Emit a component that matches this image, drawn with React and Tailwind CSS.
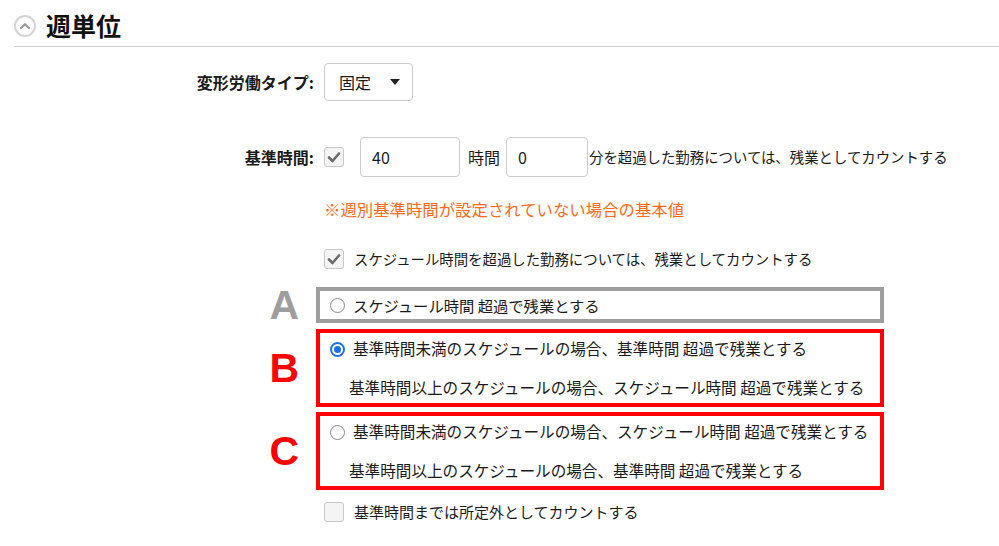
const Check = ({ checked }) => (
  <span className="inline-flex items-center justify-center w-[20px] h-[20px] shrink-0 rounded-[3px] border border-[#c8c8c8] bg-[#f4f4f4]">
    {checked && (
      <svg width="14" height="12" viewBox="0 0 14 12">
        <path d="M2 6.5 L5.5 10 L12 2.5" fill="none" stroke="#6b6b6b" strokeWidth="2.6" strokeLinecap="round" strokeLinejoin="round" />
      </svg>
    )}
  </span>
);

const Radio = ({ checked }) =>
  checked ? (
    <span className="inline-flex items-center justify-center w-[15px] h-[15px] shrink-0 rounded-full border-[2px] border-[#1a73e8] bg-white">
      <span className="w-[7px] h-[7px] rounded-full bg-[#1a73e8]" />
    </span>
  ) : (
    <span className="inline-block w-[15px] h-[15px] shrink-0 rounded-full border border-[#8a8a8a] bg-white" />
  );

const Label = ({ children }) => (
  <div className="w-[316px] shrink-0 text-right pr-[2px] font-bold text-[16px] text-[#1a1a1a]">{children}</div>
);

const Letter = ({ children, color }) => (
  <div className="w-[316px] shrink-0 flex items-center justify-end pr-[17px]">
    <span
      className={`text-[41px] font-bold leading-[28px] ${color}`}
      style={{ fontFamily: '"Liberation Sans", Arial, sans-serif' }}
    >
      {children}
    </span>
  </div>
);

const OptionBox = ({ border, lines, checked }) => (
  <div className={`w-[568px] border-[4px] ${border} pl-[10px] ${lines.length > 1 ? 'pt-[6px] pb-[5px] flex flex-col gap-[19px]' : ''}`}>
    {lines.map((line, i) => (
      <div key={i} className={`flex items-center gap-[8px] ${lines.length > 1 ? 'h-[20px] text-[15.6px]' : 'h-[28px] text-[15.3px]'}`}>
        {i === 0 ? <Radio checked={checked} /> : <span className="w-[11px]" />}
        <span>{line}</span>
      </div>
    ))}
  </div>
);

export default function App() {
  return (
    <div
      className="w-[999px] h-[546px] bg-white overflow-hidden text-[15px] text-[#1a1a1a]"
      style={{ fontFamily: '"Noto Sans CJK JP", "Noto Sans", sans-serif' }}
    >
      <div className="ml-[14px] h-[47px] border-b border-[#cfcfcf] flex items-center gap-[10px] pt-[5px]">
        <span className="w-[22px] h-[22px] rounded-full border-[2px] border-[#d4d4d4] flex items-center justify-center">
          <svg width="12" height="8" viewBox="0 0 12 8">
            <path d="M2 6 L6 2.2 L10 6" fill="none" stroke="#9a9a9a" strokeWidth="2.2" strokeLinecap="round" strokeLinejoin="round" />
          </svg>
        </span>
        <span className="text-[25px] font-bold text-[#111]">週単位</span>
      </div>

      <div className="flex items-center mt-[16px] h-[38px]">
        <Label>変形労働タイプ:</Label>
        <div className="ml-[8px] w-[89px] h-[38px] border border-[#cccccc] rounded-[4px] flex items-center justify-between pl-[14px] pr-[12px] text-[16px]">
          <span>固定</span>
          <svg width="10" height="6" viewBox="0 0 10 6">
            <path d="M0 0 L10 0 L5 6 Z" fill="#222" />
          </svg>
        </div>
      </div>

      <div className="flex items-center mt-[36px] h-[40px]">
        <Label>基準時間:</Label>
        <div className="ml-[8px] flex items-center">
          <Check checked />
          <div className="ml-[16px] w-[100px] h-[40px] border border-[#cccccc] rounded-[4px] flex items-center pl-[11px] text-[16px]">40</div>
          <span className="ml-[8px] text-[16px]">時間</span>
          <div className="ml-[6px] w-[82px] h-[40px] border border-[#cccccc] rounded-[4px] flex items-center pl-[11px] text-[16px]">0</div>
          <span className="ml-[1px] text-[14.4px]">分を超過した勤務については、残業としてカウントする</span>
        </div>
      </div>

      <div className="flex items-center mt-[22px] h-[20px]">
        <div className="w-[324px] shrink-0" />
        <span className="text-[16.4px] text-[#ff6a1a]">※週別基準時間が設定されていない場合の基本値</span>
      </div>

      <div className="flex items-center mt-[29px] h-[22px]">
        <div className="w-[324px] shrink-0" />
        <Check checked />
        <span className="ml-[10px] text-[14.4px]">スケジュール時間を超過した勤務については、残業としてカウントする</span>
      </div>

      <div className="flex items-stretch mt-[17px]">
        <Letter color="text-[#9e9e9e]">A</Letter>
        <OptionBox border="border-[#9e9e9e]" lines={['スケジュール時間 超過で残業とする']} />
      </div>

      <div className="flex items-stretch mt-[6px]">
        <Letter color="text-[#ff0000]">B</Letter>
        <OptionBox
          border="border-[#ff0000]"
          checked
          lines={['基準時間未満のスケジュールの場合、基準時間 超過で残業とする', '基準時間以上のスケジュールの場合、スケジュール時間 超過で残業とする']}
        />
      </div>

      <div className="flex items-stretch mt-[5px]">
        <Letter color="text-[#ff0000]">C</Letter>
        <OptionBox
          border="border-[#ff0000]"
          lines={['基準時間未満のスケジュールの場合、スケジュール時間 超過で残業とする', '基準時間以上のスケジュールの場合、基準時間 超過で残業とする']}
        />
      </div>

      <div className="flex items-center mt-[11px] h-[22px]">
        <div className="w-[324px] shrink-0" />
        <Check />
        <span className="ml-[10px] text-[15px]">基準時間までは所定外としてカウントする</span>
      </div>
    </div>
  );
}
